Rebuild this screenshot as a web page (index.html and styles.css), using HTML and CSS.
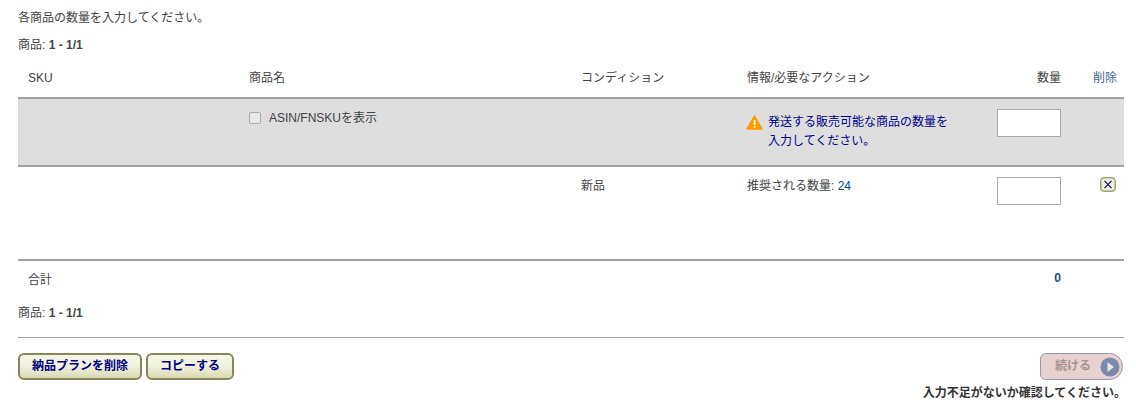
FILE: index.html
```html
<!DOCTYPE html>
<html lang="ja">
  <head>
    <meta charset="UTF-8" />
    <title>数量を入力</title>
    <link rel="stylesheet" href="styles.css">
  </head>
  <body>
    <p class="intro">各商品の数量を入力してください。</p>
    <p class="count count-top">商品: <b>1 - 1/1</b></p>

    <div class="row head-row">
      <div class="sku">SKU</div>
      <div>商品名</div>
      <div>コンディション</div>
      <div>情報/必要なアクション</div>
      <div class="qty-head">数量</div>
      <div class="del-head">削除</div>
    </div>

    <div class="row group-row">
      <div></div>
      <label class="show-asin"><span class="check"></span>ASIN/FNSKUを表示</label>
      <div></div>
      <div class="warn">
        <svg class="warn-icon" width="17" height="15" viewBox="0 0 17 15">
          <path d="M8.5 1 L16 14 L1 14 Z" fill="#f90" stroke="#f90" stroke-width="1.5" stroke-linejoin="round"/>
          <rect x="7.7" y="5" width="1.7" height="5" fill="#fff"/>
          <rect x="7.7" y="11" width="1.7" height="1.7" fill="#fff"/>
        </svg>
        <span>発送する販売可能な商品の数量を<br>入力してください。</span>
      </div>
      <input class="qty" type="text">
      <div></div>
    </div>

    <div class="row item-row">
      <div></div>
      <div></div>
      <div class="item-text">新品</div>
      <div class="item-text">推奨される数量: <span class="num">24</span></div>
      <input class="qty" type="text">
      <div class="del-cell">
        <svg width="16" height="15" viewBox="0 0 16 15">
          <rect x="0.75" y="0.75" width="14.5" height="13.5" rx="3.5" fill="#f0efd8" stroke="#a3a37a" stroke-width="1.5"/>
          <path d="M4.5 3.8 L11.5 11.2 M11.5 3.8 L4.5 11.2" stroke="#000080" stroke-width="1.1"/>
        </svg>
      </div>
    </div>

    <div class="row total-row">
      <div class="sku total-label">合計</div>
      <div></div>
      <div></div>
      <div></div>
      <div class="total-num">0</div>
      <div></div>
    </div>

    <p class="count count-bottom">商品: <b>1 - 1/1</b></p>
    <hr class="rule">

    <div class="actions">
      <div class="left-btns">
        <button class="btn">納品プランを削除</button>
        <button class="btn">コピーする</button>
      </div>
      <button class="next-btn" disabled>
        <span>続ける</span>
        <svg width="20" height="20" viewBox="0 0 20 20">
          <circle cx="10" cy="10" r="9.5" fill="#7b8aa8"/>
          <path d="M7.5 5 L14 10 L7.5 15 Z" fill="#e6e6e6"/>
        </svg>
      </button>
    </div>
    <p class="check-msg">入力不足がないか確認してください。</p>
  </body>
</html>
```

FILE: styles.css
```css
* {
  margin: 0;
  padding: 0;
  box-sizing: border-box;
}

body {
  padding: 11px 12px 0 18px;
  font-family: "Liberation Sans", "Noto Sans CJK JP", sans-serif;
  font-size: 12px;
  line-height: 14px;
  color: #444;
  background: #fff;
}

.intro {
  height: 14px;
}

.count-top {
  margin-top: 13px;
}

.row {
  display: grid;
  grid-template-columns: 231px 332px 166px 250px 64px 63px;
}

.head-row {
  margin-top: 11px;
  height: 36px;
  padding-top: 8px;
  border-bottom: 2px solid #a3a3a3;
}

.sku {
  padding-left: 10px;
}

.qty-head {
  text-align: right;
}

.del-head {
  padding-left: 32px;
  color: #3f6392;
}

.group-row {
  height: 68px;
  padding-top: 10px;
  background: #dedede;
  border-bottom: 2px solid #a3a3a3;
}

.show-asin {
  display: flex;
  align-items: flex-start;
  margin-top: 2px;
}

.check {
  width: 12px;
  height: 12px;
  margin: 1px 8px 0 0;
  background: #e9e9e9;
  border: 1px solid #aaa;
  border-radius: 2px;
}

.warn {
  display: flex;
  gap: 5px;
  margin: 4px 0 0 -1px;
  line-height: 19px;
  color: #00008b;
}

.warn-icon {
  flex: none;
  margin-top: 2px;
}

.qty {
  width: 64px;
  height: 28px;
  background: #fff;
  border: 1px solid #aaa;
}

.item-row {
  height: 94px;
  padding-top: 10px;
  border-bottom: 2px solid #a3a3a3;
}

.item-text {
  margin-top: 2px;
}

.num {
  color: #004b91;
}

.del-cell {
  padding-left: 39px;
}

.total-row {
  height: 38px;
  padding-top: 11px;
}

.total-label {
  margin-top: 1px;
}

.total-num {
  text-align: right;
  font-weight: bold;
  color: #1f4e79;
  margin-top: -1px;
}

.count-bottom {
  margin-top: 7px;
}

.rule {
  margin-top: 17px;
  border: 0;
  border-top: 1px solid #a3a3a3;
}

.actions {
  display: flex;
  justify-content: space-between;
  align-items: flex-start;
  margin-top: 15px;
}

.left-btns {
  display: flex;
  gap: 4px;
}

.btn {
  height: 27px;
  padding: 0 12px 5px;
  font-family: inherit;
  font-size: 12px;
  font-weight: bold;
  color: #000080;
  background: linear-gradient(#f6f6e8 0%, #f2f2e0 45%, #d9d9b4 100%);
  border: 2px solid #87875e;
  border-radius: 6px;
}

.next-btn {
  display: flex;
  align-items: center;
  justify-content: space-between;
  width: 83px;
  height: 27px;
  margin-right: 1px;
  padding: 0 2px 4px 14px;
  font-family: inherit;
  font-size: 12px;
  font-weight: bold;
  color: #a3948f;
  background: #e8d2cf;
  border: 1px solid #8f9ab3;
  border-radius: 6px 14px 14px 6px;
}

.next-btn svg {
  margin-top: 4px;
}

.check-msg {
  margin: 6px -2px 0 0;
  text-align: right;
  font-weight: bold;
  color: #333;
}
```
